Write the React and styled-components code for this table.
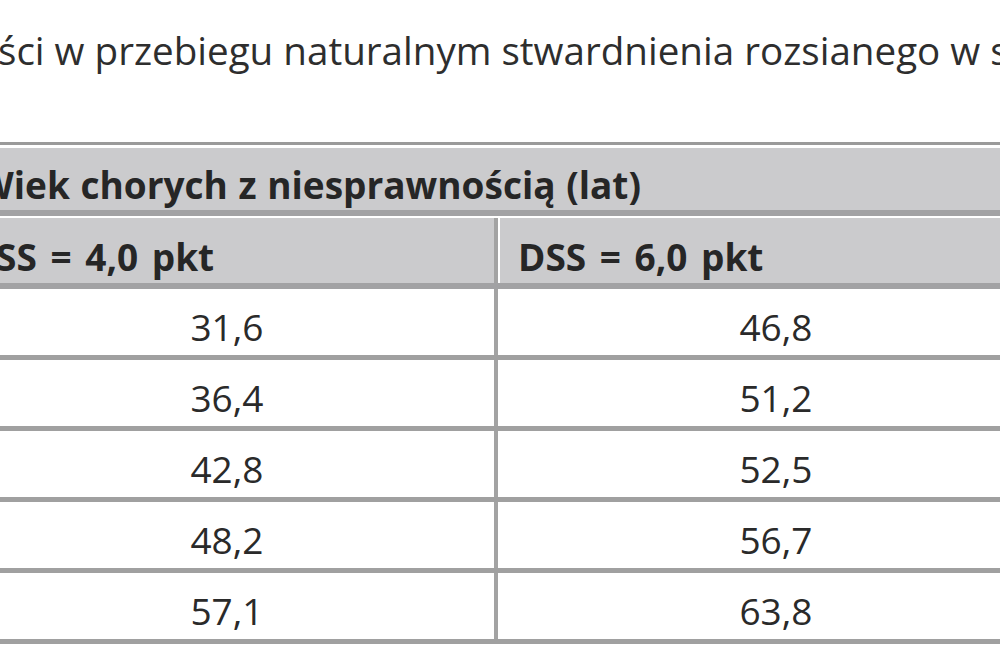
import React from 'react';
import styled, { createGlobalStyle } from 'styled-components';

const GlobalStyle = createGlobalStyle`
  html, body {
    margin: 0;
    padding: 0;
    background: #ffffff;
    overflow: hidden;
  }
  body {
    font-family: 'Open Sans', 'DejaVu Sans', sans-serif;
    color: #333333;
  }
`;

const Page = styled.div`
  width: 1000px;
  height: 672px;
  overflow: hidden;
  background: #ffffff;
`;

const Caption = styled.div`
  margin-left: -2px;
  padding-top: 24px;
  height: 56px;
  font-size: 38.6px;
  line-height: 52px;
  color: #2e2e2e;
  white-space: nowrap;
`;

const Table = styled.div`
  margin-top: 62px;
  margin-left: -40px;
  width: 1094px;
  border-top: 3px solid #9a9a9a;
  padding-top: 3px;
`;

const GroupHead = styled.div`
  height: 68px;
  box-sizing: border-box;
  display: flex;
  align-items: center;
  padding: 10px 0 0 18px;
  background: #cbcbcd;
  border-bottom: 6px solid #a2a2a4;
  font-size: 37px;
  font-weight: 700;
  word-spacing: 1px;
  color: #262626;
  white-space: nowrap;
`;

const Row = styled.div`
  display: grid;
  grid-template-columns: 534px 4px 556px;
  border-bottom: ${(p) => (p.$head ? '6px solid #a2a2a4' : '5px solid #a0a0a0')};
  border-top: ${(p) => (p.$head ? '2px solid #ffffff' : 'none')};
`;

const Divider = styled.div`
  background: #a3a3a3;
`;

const HeadCell = styled.div`
  height: 65px;
  box-sizing: border-box;
  display: flex;
  align-items: center;
  padding: 12px 0 0 18px;
  background: #cbcbcd;
  font-size: 37px;
  font-weight: 700;
  word-spacing: 4px;
  color: #262626;
  white-space: nowrap;
  text-indent: ${(p) => p.$indent || 0}px;
  border-left: ${(p) => (p.$gap ? '2px solid #ffffff' : 'none')};
`;

const Cell = styled.div`
  height: 66px;
  box-sizing: border-box;
  display: flex;
  align-items: center;
  justify-content: center;
  padding-top: 8px;
  font-size: 37px;
  color: #2a2a2a;
`;

const rows = [
  ['31,6', '46,8'],
  ['36,4', '51,2'],
  ['42,8', '52,5'],
  ['48,2', '56,7'],
  ['57,1', '63,8'],
];

export default function App() {
  return (
    <Page>
      <GlobalStyle />
      <Caption>ści w przebiegu naturalnym stwardnienia rozsianego w skali</Caption>
      <Table>
        <GroupHead>Wiek chorych z niesprawnością (lat)</GroupHead>
        <Row $head>
          <HeadCell $indent={-30}>EDSS = 4,0 pkt</HeadCell>
          <Divider />
          <HeadCell $gap>DSS = 6,0 pkt</HeadCell>
        </Row>
        {rows.map((r) => (
          <Row key={r[0]}>
            <Cell>{r[0]}</Cell>
            <Divider />
            <Cell>{r[1]}</Cell>
          </Row>
        ))}
      </Table>
    </Page>
  );
}
